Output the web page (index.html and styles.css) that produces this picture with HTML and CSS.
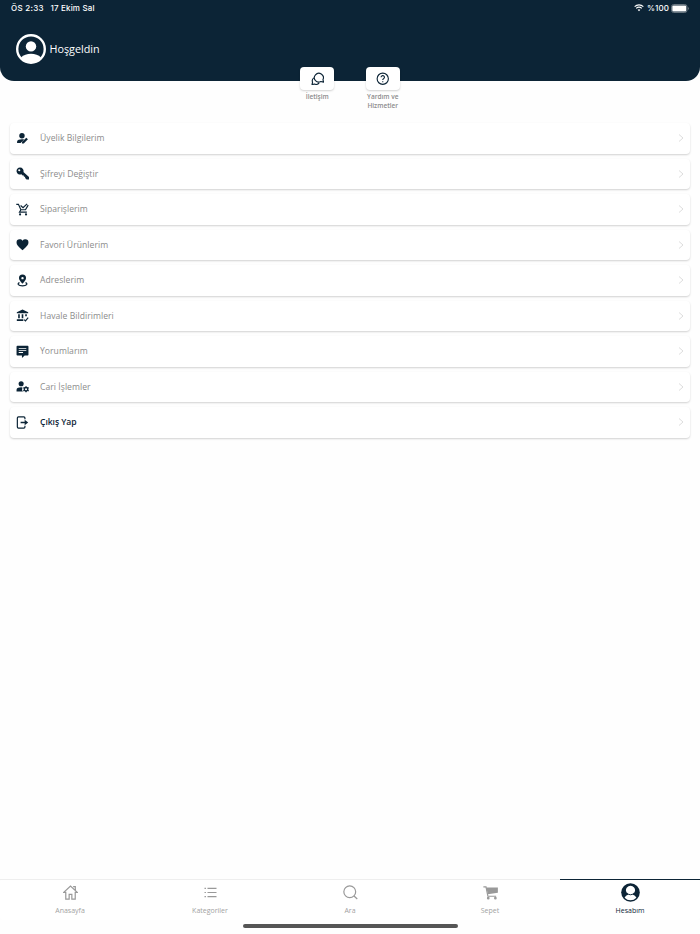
FILE: index.html
```
<!DOCTYPE html>
<html lang="tr">
  <head>
    <meta charset="utf-8">
    <title>Hesabım</title>
    <link rel="stylesheet" href="styles.css">
  </head>
  <body>
    <header class="header">
      <div class="status">
        <span class="clock">ÖS 2:33</span>
        <span class="date">17 Ekim Sal</span>
        <svg class="wifi" viewBox="0 0 20 15"><path d="M10 14.500 7.200 11.600a4.200 4.200 0 0 1 5.600 0z" fill="#fff" stroke="none"/><path d="M4.400 8.800a8.300 8.300 0 0 1 11.200 0M1.300 5.300a12.700 12.700 0 0 1 17.400 0"/></svg>
        <span class="percent">%100</span>
        <svg class="battery" viewBox="0 0 18 9"><rect x=".5" y=".5" width="15.500" height="8" rx="2.200" fill="none" stroke="#66747f"/><rect x="1.300" y="1.500" width="13.900" height="6" rx="1.100" fill="#fff"/><path d="M17 3v3q1-.6 1-1.500T17 3z" fill="#66747f"/></svg>
      </div>
      <div class="welcome">
        <svg class="avatar" viewBox="0 0 30 30">
          <circle cx="15" cy="15" r="13.800" fill="none" stroke="#fff" stroke-width="2.400"/>
          <circle cx="15" cy="12.400" r="5.200" fill="#fff"/>
          <path d="M5 23.500C7.500 20.800 11 19.700 15 19.700s7.500 1.100 10 3.800A13.500 13.500 0 0 1 15 29 13.500 13.500 0 0 1 5 23.500z" fill="#fff"/>
        </svg>
        <span>Hoşgeldin</span>
      </div>
    </header>

    <nav class="shortcuts">
      <a class="shortcut">
        <span class="tile">
          <svg viewBox="0 0 24 24" class="line"><path d="M8 15.500A8 8 0 1 1 21.300 13.500L22.300 18l-4.800-1A8 8 0 0 1 8 15.500z"/><path d="M5 10.500a6.500 6.500 0 0 0-2.200 7.700L1.800 22.200l4.400-.7a7 7 0 0 0 8.300-2.300"/></svg>
        </span>
        <span>İletişim</span>
      </a>
      <a class="shortcut">
        <span class="tile">
          <svg viewBox="0 0 24 24" class="line"><circle cx="12" cy="12" r="10"/><path d="M9 9.300A3 3 0 0 1 15 9.500c0 2.300-3 2.300-3 4.700M12 16.300v2"/></svg>
        </span>
        <span>Yardım ve<br>Hizmetler</span>
      </a>
    </nav>

    <main class="menu">
      <a class="row">
        <svg class="icon" viewBox="0 0 24 24"><circle cx="11" cy="7" r="5"/><path d="M2 20.500V18c0-3 4.500-4.500 9-4.500 1.400 0 2.800.2 4 .5l-6.500 6.500z"/><path d="m11 21 .3-3L19 10.500l3 3L14.300 21z"/></svg>
        <span>Üyelik Bilgilerim</span><svg class="chevron" viewBox="0 0 6 8"><path d="m1 .5 4 3.500-4 3.500"/></svg>
      </a>
      <a class="row">
        <svg class="icon" viewBox="0 0 24 24"><path fill-rule="evenodd" d="M7.500 1A6.500 6.500 0 1 0 10 13.500l2.200 2.200h2.300v2.300h2.300v2.300l2.700 2.700H24v-4.500L13.700 9.400A6.500 6.500 0 0 0 7.500 1zM6 4a2 2 0 1 1 0 4 2 2 0 0 1 0-4z"/></svg>
        <span>Şifreyi Değiştir</span><svg class="chevron" viewBox="0 0 6 8"><path d="m1 .5 4 3.500-4 3.500"/></svg>
      </a>
      <a class="row">
        <svg class="icon" viewBox="0 0 24 24"><path class="stroke" d="M.5 2.500H4.500l4.500 10h8.500L22.500 4M9 12.500 6.500 16.700H20M8.500 4.500l4.500 4L20.500 1.500"/><circle cx="7.500" cy="21" r="2"/><circle cx="18.500" cy="21" r="2"/></svg>
        <span>Siparişlerim</span><svg class="chevron" viewBox="0 0 6 8"><path d="m1 .5 4 3.500-4 3.500"/></svg>
      </a>
      <a class="row">
        <svg class="icon" viewBox="0 0 24 24"><path d="m12 22.500-1.600-1.400C4.300 15.600 1 12.700 1 8.600A6 6 0 0 1 7.100 2.500c1.900 0 3.700.9 4.900 2.400a6.400 6.400 0 0 1 4.900-2.400A6 6 0 0 1 23 8.600c0 4.100-3.300 7-9.400 12.500z"/></svg>
        <span>Favori Ürünlerim</span><svg class="chevron" viewBox="0 0 6 8"><path d="m1 .5 4 3.500-4 3.500"/></svg>
      </a>
      <a class="row">
        <svg class="icon" viewBox="0 0 24 24"><path fill-rule="evenodd" d="M12 1a6.500 6.500 0 0 0-6.500 6.500C5.500 12 12 18 12 18s6.500-6 6.500-10.500A6.500 6.500 0 0 0 12 1zm0 4.500a2.200 2.200 0 1 1 0 4.400 2.200 2.200 0 0 1 0-4.400z"/><path class="stroke" d="M6.500 16C1.500 18 4 22 12 22s10.500-4 5.500-6"/></svg>
        <span>Adreslerim</span><svg class="chevron" viewBox="0 0 6 8"><path d="m1 .5 4 3.500-4 3.500"/></svg>
      </a>
      <a class="row">
        <svg class="icon" viewBox="0 0 24 24"><path d="M1.500 8v-2L12 1l10.500 5v2zM4 9.500h3V17H4zM10.500 9.500h3V17h-3zM17 9.500h3v4h-3zM1.500 19h12v3h-12z"/><path class="stroke" d="m15 19.500 2.500 2.500 5-6"/></svg>
        <span>Havale Bildirimleri</span><svg class="chevron" viewBox="0 0 6 8"><path d="m1 .5 4 3.500-4 3.500"/></svg>
      </a>
      <a class="row">
        <svg class="icon" viewBox="0 0 24 24"><path fill-rule="evenodd" d="M2.500 1.500h19q1.500 0 1.500 1.500v15q0 1.500-1.500 1.500H16L11 24v-4.500H2.500Q1 19.500 1 18V3q0-1.500 1.500-1.500zM5 6v1.600h14V6zm0 3.500v1.600h14V9.500zM5 13v1.600h8V13z"/></svg>
        <span>Yorumlarım</span><svg class="chevron" viewBox="0 0 6 8"><path d="m1 .5 4 3.500-4 3.500"/></svg>
      </a>
      <a class="row">
        <svg class="icon" viewBox="0 0 24 24"><circle cx="9.500" cy="7" r="4.700"/><path d="M1 21v-3c0-3 4.500-4.500 8.500-4.500l2.500.2a7 7 0 0 0 .8 7.300z"/><circle cx="18.500" cy="17" r="3.200" fill="none" stroke="#0c2436" stroke-width="2.600"/><path d="M17.300 11.500h2.400v2h-2.400zM17.300 20.500h2.400v2h-2.400zM13 15l1.200-2 2 1.200-1.200 2zM24 15l-1.200-2-2 1.200 1.200 2zM13 19l1.200 2 2-1.200-1.200-2zM24 19l-1.200 2-2-1.200 1.200-2z"/></svg>
        <span>Cari İşlemler</span><svg class="chevron" viewBox="0 0 6 8"><path d="m1 .5 4 3.500-4 3.500"/></svg>
      </a>
      <a class="row logout">
        <svg class="icon" viewBox="0 0 24 24"><path class="stroke" d="M16.500 6V3.500q0-2-2-2H4.500q-2 0-2 2v17q0 2 2 2h10q2 0 2-2V18"/><path d="M8.500 10.700H16V7l6.500 5-6.500 5v-3.700H8.500z"/></svg>
        <span>Çıkış Yap</span><svg class="chevron" viewBox="0 0 6 8"><path d="m1 .5 4 3.500-4 3.500"/></svg>
      </a>
    </main>

    <footer class="tabs">
      <a class="tab">
        <svg viewBox="0 0 20 20"><path d="M3.700 9v9.800h4.500v-6.300h3.600v6.300h4.500V9M3.300 9.700H1L10 1.300l9 8.400h-2.300M13.500 2.200h2.900V7"/></svg>
        <span>Anasayfa</span>
      </a>
      <a class="tab">
        <svg viewBox="0 0 20 20"><path d="M2 4.500h1.900M6 4.500h12M2 10h1.900M6 10h12M2 15.500h1.900M6 15.500h12"/></svg>
        <span>Kategoriler</span>
      </a>
      <a class="tab">
        <svg viewBox="0 0 20 20"><circle cx="9" cy="9" r="7.900"/><path d="m14.700 14.700 4.300 4"/></svg>
        <span>Ara</span>
      </a>
      <a class="tab">
        <svg viewBox="0 0 20 20"><path d="M.5 2.500h3.500L6.500 15H17.500"/><path d="M4.500 3.300H19.800V10.300L6.500 12.300z" fill="#999" stroke="none"/><circle cx="7" cy="17.500" r="1"/><circle cx="16.500" cy="17.500" r="1"/></svg>
        <span>Sepet</span>
      </a>
      <a class="tab active">
        <svg viewBox="0 0 20 20"><circle cx="10" cy="10" r="9.800" fill="#0c2436" stroke="none"/><path d="M3.800 15.500c1-2.200 2.700-3.100 4.200-3.500a4.800 4.800 0 1 1 4 0c1.500.4 3.200 1.300 4.200 3.500a8.300 8.300 0 0 1-12.400 0z" fill="#fff" stroke="none"/><path d="M6.500 10.700a4.500 4.500 0 0 0 7 0" stroke="#0c2436" stroke-width="1"/></svg>
        <span>Hesabım</span>
      </a>
    </footer>
    <div class="home-bar"></div>
  </body>
</html>
```
FILE: styles.css
```
* {
  box-sizing: border-box;
}

body {
  margin: 0;
  height: 934px;
  display: flex;
  flex-direction: column;
  overflow: hidden;
  background: #fefefe;
  color: #8c8c8c;
  font-family: "Open Sans", sans-serif;
}

svg {
  display: block;
  flex: none;
}

.header {
  height: 81px;
  flex: none;
  background: #0c2436;
  border-radius: 0 0 14px 14px;
  color: #fff;
}

.status {
  height: 16px;
  padding: 0 11px;
  display: flex;
  align-items: center;
  font: 500 8px Inter, sans-serif;
}

.clock {
  width: 39.5px;
  letter-spacing: .27px;
}

.date {
  letter-spacing: .17px;
}

.wifi {
  width: 10px;
  height: 7.5px;
  margin-left: auto;
  fill: none;
  stroke: #fff;
  stroke-width: 2.4;
}

.percent {
  margin: 0 2px 0 3px;
  letter-spacing: .1px;
}

.battery {
  width: 18px;
  height: 9px;
}

.welcome {
  display: flex;
  align-items: center;
  gap: 3.5px;
  padding: 18px 16px;
  font-size: 10.8px;
  font-weight: 500;
}

.welcome span {
  margin-bottom: 2px;
}

.avatar {
  width: 30px;
  height: 30px;
}

.shortcuts {
  height: 56px;
  flex: none;
  margin-top: -14px;
  display: flex;
  justify-content: center;
  gap: 25px;
}

.shortcut {
  width: 40.5px;
  display: flex;
  flex-direction: column;
  align-items: center;
  text-align: center;
  font-size: 6.5px;
  font-weight: 600;
  line-height: 9px;
  white-space: nowrap;
}

.tile {
  width: 34px;
  height: 23px;
  margin-bottom: 2px;
  display: flex;
  align-items: center;
  justify-content: center;
  background: #fff;
  border-radius: 4px;
  box-shadow: 0 1px 2px rgba(0, 0, 0, .18);
}

.tile svg {
  width: 13.5px;
  height: 13.5px;
}

.line {
  fill: none;
  stroke: #0c2436;
  stroke-width: 2;
  stroke-linejoin: round;
}

.menu {
  flex: 1;
  padding: 0 10px;
  display: flex;
  flex-direction: column;
  gap: 5px;
}

.row {
  height: 30.5px;
  padding: 0 6px 0 5.5px;
  display: flex;
  align-items: center;
  background: #fff;
  border-radius: 4px;
  box-shadow: 0 1px 2px rgba(0, 0, 0, .18);
  font-size: 8.6px;
  font-weight: 500;
  letter-spacing: .04px;
}

.icon {
  width: 13px;
  height: 13px;
  margin-right: 11.5px;
  fill: #0c2436;
}

.icon .stroke {
  fill: none;
  stroke: #0c2436;
  stroke-width: 2.2;
}

.chevron {
  width: 6px;
  height: 8px;
  margin-left: auto;
  fill: none;
  stroke: #ddd;
}

.logout {
  color: #0c2436;
  font-weight: 600;
  letter-spacing: -.05px;
}

.tabs {
  height: 41px;
  flex: none;
  display: flex;
  border-radius: 4px;
  background: #fff;
}

.tab {
  flex: 1;
  padding-top: 5px;
  display: flex;
  flex-direction: column;
  align-items: center;
  border-top: 1px solid #eee;
  color: #a2a2a2;
  font-size: 7px;
  line-height: 10px;
}

.tab svg {
  width: 15px;
  height: 15px;
  margin-bottom: 6px;
  fill: none;
  stroke: #999;
  stroke-width: 1.6;
}

.tab.active {
  padding-top: 3px;
  border-top: 1.5px solid #0c2436;
  color: #0c2436;
  font-weight: 500;
}

.tab.active svg {
  width: 19px;
  height: 19px;
  margin-bottom: 4px;
}

.home-bar {
  width: 215px;
  height: 4px;
  flex: none;
  margin: 4px auto 6px;
  border-radius: 2px;
  background: #555;
}
```
